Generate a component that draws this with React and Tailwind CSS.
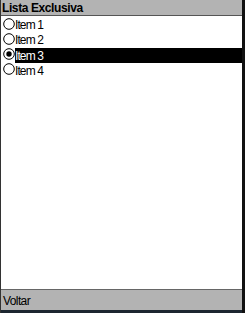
import React from 'react'

const items = ['Item 1', 'Item 2', 'Item 3', 'Item 4']

function Radio({ checked }) {
  return (
    <svg width="12" height="12" viewBox="0 0 12 12" className="shrink-0 mt-[0.5px]">
      <circle cx="6" cy="6" r="5.3" fill="white" stroke="black" strokeWidth="1" />
      {checked && <circle cx="6" cy="6" r="2.7" fill="black" />}
    </svg>
  )
}

export default function App() {
  return (
    <div
      className="w-[245px] h-[313px] flex bg-white overflow-hidden"
      style={{ fontFamily: '"Liberation Sans", Arial, sans-serif' }}
    >
      <div className="flex-1 flex flex-col border-l border-[#333]">
        <div className="h-[16px] bg-[#b3b3b3] border-b border-[#555] flex items-center pl-[1px]">
          <span className="text-[12px] font-bold leading-none tracking-[-0.4px] text-black">Lista Exclusiva</span>
        </div>
        <div className="flex-1 flex flex-col pt-[1px]">
          {items.map((label, i) => {
            const sel = i === 2
            return (
              <div key={label} className="h-[15.33px] flex items-start pl-[2px]">
                <Radio checked={sel} />
                <span
                  className={
                    'flex-1 h-[15px] flex items-end pb-[1px] text-[12px] leading-none tracking-[-0.9px] ' +
                    (sel ? 'bg-black text-white' : 'text-black')
                  }
                >
                  {label}
                </span>
              </div>
            )
          })}
        </div>
        <div className="h-[21px] bg-[#b3b3b3] border-t border-[#666] flex items-end pl-[2px] pb-[3px]">
          <span className="text-[12px] leading-none tracking-[-0.6px] text-black">Voltar</span>
        </div>
        <div className="h-[3px] bg-[#1c2630]" />
      </div>
      <div className="w-[3px] bg-[#111]" />
    </div>
  )
}
